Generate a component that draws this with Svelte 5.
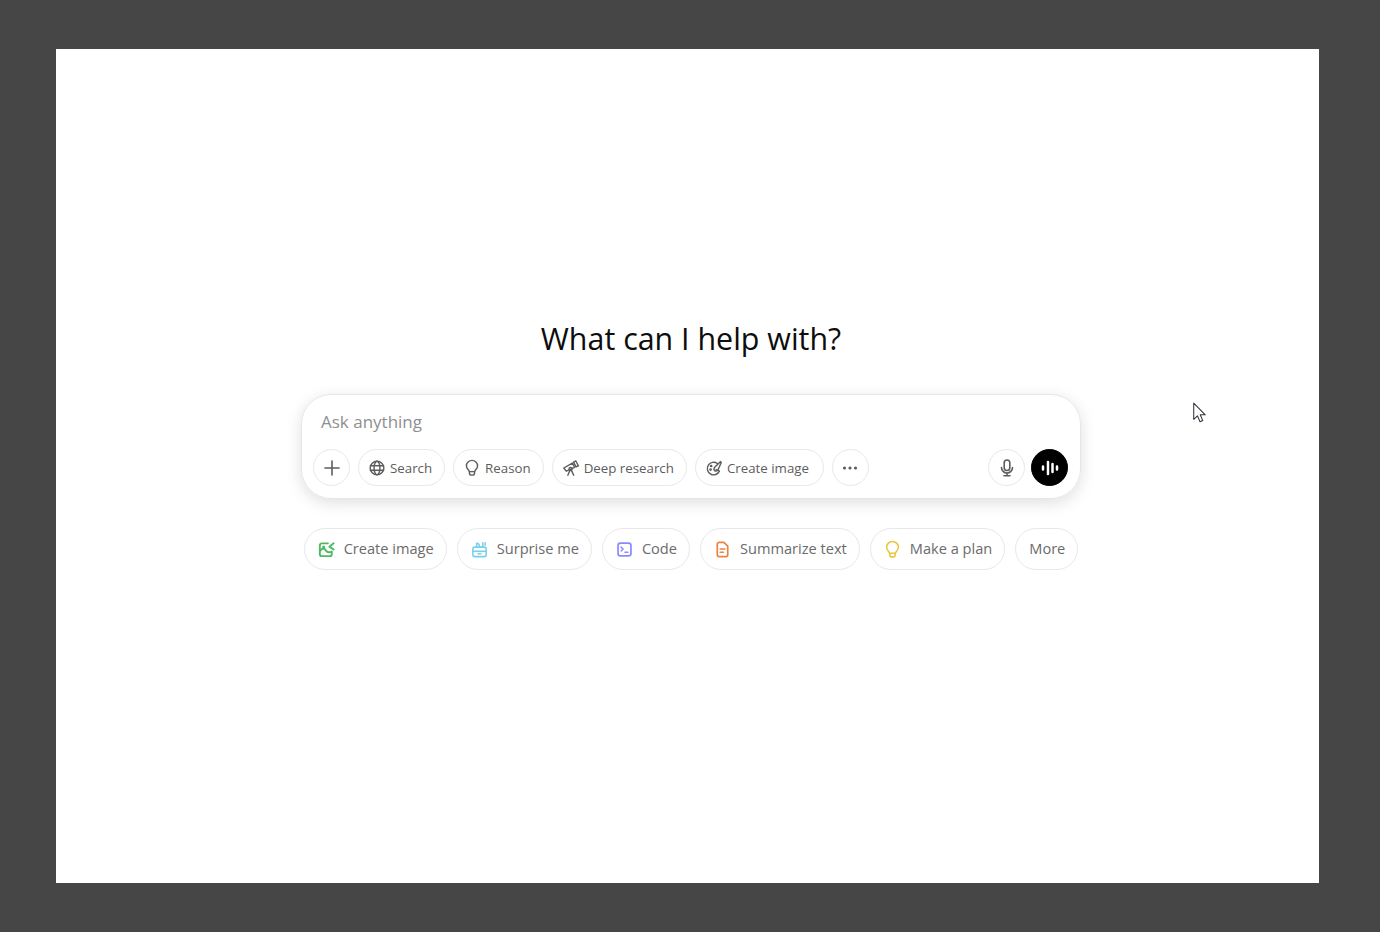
<script>
  const tools = [
    { label: 'Search', icon: 'globe' },
    { label: 'Reason', icon: 'bulb' },
    { label: 'Deep research', icon: 'scope' },
    { label: 'Create image', icon: 'brush' },
  ];

  const prompts = [
    { label: 'Create image', icon: 'picture', color: '#4cb963' },
    { label: 'Surprise me', icon: 'gift', color: '#76d0eb' },
    { label: 'Code', icon: 'code', color: '#8a8aff' },
    { label: 'Summarize text', icon: 'doc', color: '#ea8444' },
    { label: 'Make a plan', icon: 'bulb', color: '#e8c63c' },
  ];
</script>

{#snippet icon(name, size)}
  <svg width={size} height={size} viewBox="0 0 20 20" fill="none" stroke="currentColor" stroke-width="1.6" stroke-linecap="round" stroke-linejoin="round">
    {#if name === 'globe'}
      <circle cx="10" cy="10" r="7.6" />
      <ellipse cx="10" cy="10" rx="3.3" ry="7.6" />
      <path d="M2.6 7.6h14.8M2.6 12.4h14.8" />
    {:else if name === 'bulb'}
      <path d="M7 14c0-1.600-3.200-3-3.200-6.300a6.200 6.200 0 0 1 12.400 0c0 3.300-3.200 4.700-3.200 6.300z" />
      <path d="M7.200 14v2c0 1 1 1.900 2.800 1.900s2.800-.9 2.800-1.900v-2" />
    {:else if name === 'scope'}
      <path d="M2 10l9.500-5.500 2.500 4.700-9.300 4.300z" />
      <path d="M12.800 3.500l2.600-1.300 2.800 5.300-2.600 1.300z" />
      <circle cx="9.500" cy="11" r="1.700" />
      <path d="M8.700 12.800L6.500 18M10.500 12.600l2.500 5.400" />
    {:else if name === 'brush'}
      <path d="M13.800 5A7 7 0 1 0 16 13.500c-.6-1.500-2.600-.8-3.600-1.800" />
      <path d="M17.300 2.800l-6.500 6.400c-1.300 1.300-1.100 3 .2 3.900 1.500.9 3-.2 3.600-1.500l3.400-7.500z" />
      <circle cx="6.800" cy="7.800" r=".7" />
      <circle cx="6.200" cy="11.800" r=".7" />
    {:else if name === 'picture'}
      <path d="M15.500 13v2a2 2 0 0 1-2 2H5a2 2 0 0 1-2-2V5.500a2 2 0 0 1 2-2h6.500" stroke-width="2" />
      <path d="M3.200 11.500c3-3.500 4.500-3 6.300-.3 1.500 2.300 3 2.300 6 1" stroke-width="2" />
      <path d="M17.500 3.500l-4.500 3.500 4.500 3" stroke-width="2" />
      <circle cx="7" cy="7.500" r=".8" />
    {:else if name === 'gift'}
      <rect x="3" y="7.500" width="14" height="10" rx="2" />
      <path d="M3 11.800h14M8.500 14.500h3" />
      <path d="M7 7.500V3.500c1.800 0 3 1.700 3 4M13.500 7.500V3M16 3v2.500" />
    {:else if name === 'code'}
      <rect x="3.200" y="3.200" width="13.600" height="13.600" rx="2.500" stroke-width="1.800" />
      <path d="M6.500 7.500l2 2-2 2M10.500 13h3" />
    {:else if name === 'doc'}
      <path d="M6 2.500h5.500l4 4V15.500a2 2 0 0 1-2 2h-7a2 2 0 0 1-2-2V4.500a2 2 0 0 1 2-2z" stroke-width="1.800" />
      <path d="M7.500 9.500h5M7.500 13h3.500" />
    {/if}
  </svg>
{/snippet}

<main class="page">
  <section class="panel">
    <h1>What can I help with?</h1>

    <div class="composer">
      <div class="placeholder">Ask anything</div>
      <div class="toolbar">
        <button class="round" aria-label="Add">
          <svg width="20" height="20" viewBox="0 0 20 20" fill="none" stroke="#5d5d5d" stroke-width="1.6" stroke-linecap="round"><path d="M10 3v14M3 10h14" /></svg>
        </button>
        {#each tools as tool}
          <button class="tool">
            {@render icon(tool.icon, 18)}
            <span>{tool.label}</span>
          </button>
        {/each}
        <button class="round" aria-label="More tools">
          <svg width="20" height="20" viewBox="0 0 20 20" fill="#5d5d5d"><circle cx="4.500" cy="10" r="1.600" /><circle cx="10" cy="10" r="1.600" /><circle cx="15.500" cy="10" r="1.600" /></svg>
        </button>
        <div class="spacer"></div>
        <button class="round" aria-label="Dictate">
          <svg width="20" height="20" viewBox="0 0 20 20" fill="none" stroke="#5d5d5d" stroke-width="1.6" stroke-linecap="round"><rect x="7.200" y="2" width="5.600" height="10.500" rx="2.800" /><path d="M4.500 9.500a5.500 5.500 0 0 0 11 0M10 15v2.500M7 17.800h6" /></svg>
        </button>
        <button class="round voice" aria-label="Voice mode">
          <svg width="20" height="20" viewBox="0 0 20 20" fill="none" stroke="#fff" stroke-width="2.500" stroke-linecap="round"><path d="M3 8.500v3M8 4v12M12.500 6v8M17 8.500v3" /></svg>
        </button>
      </div>
    </div>

    <div class="prompts">
      {#each prompts as prompt}
        <button class="prompt">
          <span class="prompt-icon" style="color: {prompt.color}">{@render icon(prompt.icon, 19)}</span>
          <span>{prompt.label}</span>
        </button>
      {/each}
      <button class="prompt">More</button>
    </div>

    <svg class="cursor" width="15" height="21" viewBox="0 0 14 20" fill="#fff" stroke="#2d3440" stroke-width="1" stroke-linejoin="round">
      <path d="M1.500 1v15.500l3.600-3.300 2.400 5.600 2.600-1.100-2.400-5.500h4.800z" />
    </svg>
  </section>
</main>

<style>
  :global(body) {
    background: #464646;
  }

  .page {
    padding: 49px 61px 49px 56px;
    font-family: "Open Sans", "Noto Sans", sans-serif;
  }

  .panel {
    position: relative;
    height: 834px;
    box-sizing: border-box;
    padding: 271px 0 0 7px;
    background: #fff;
    display: flex;
    flex-direction: column;
    align-items: center;
  }

  h1 {
    margin: 0;
    font-size: 30.4px;
    line-height: 38px;
    font-weight: 400;
    color: #0d0d0d;
  }

  .composer {
    margin-top: 36px;
    width: 780px;
    height: 105px;
    box-sizing: border-box;
    padding: 15px 12px 12px 11px;
    border: 1px solid #e6e6e6;
    border-radius: 30px;
    box-shadow: 0 4px 16px rgba(0, 0, 0, 0.13);
    display: flex;
    flex-direction: column;
    justify-content: space-between;
  }

  .placeholder {
    padding-left: 8px;
    font-size: 17px;
    line-height: 24px;
    color: #8f8f8f;
  }

  .toolbar {
    display: flex;
    align-items: center;
    gap: 8px;
  }

  .spacer {
    flex: 1;
  }

  button {
    font: inherit;
    background: #fff;
    border: 1px solid #e8e8e8;
    padding: 0;
    cursor: pointer;
  }

  .round {
    width: 37px;
    height: 37px;
    border-radius: 50%;
    display: flex;
    align-items: center;
    justify-content: center;
  }

  .voice {
    margin-left: -2px;
    background: #000;
    border-color: #000;
  }

  .tool {
    height: 37px;
    padding: 0 12px 0 9px;
    border-radius: 19px;
    display: flex;
    align-items: center;
    gap: 4px;
    font-size: 13.3px;
    color: #5d5d5d;
  }

  .tool:nth-child(5) {
    padding-right: 14px;
  }

  .prompts {
    margin-top: 29px;
    display: flex;
    gap: 10px;
  }

  .prompt {
    height: 42px;
    padding: 0 12px 2px 13px;
    border-radius: 21px;
    display: flex;
    align-items: center;
    font-size: 14.6px;
    color: #6b6b6b;
  }

  .prompt-icon {
    display: flex;
    margin: 2px 8px 0 -1px;
  }

  .cursor {
    position: absolute;
    left: 1136px;
    top: 353px;
  }
</style>
